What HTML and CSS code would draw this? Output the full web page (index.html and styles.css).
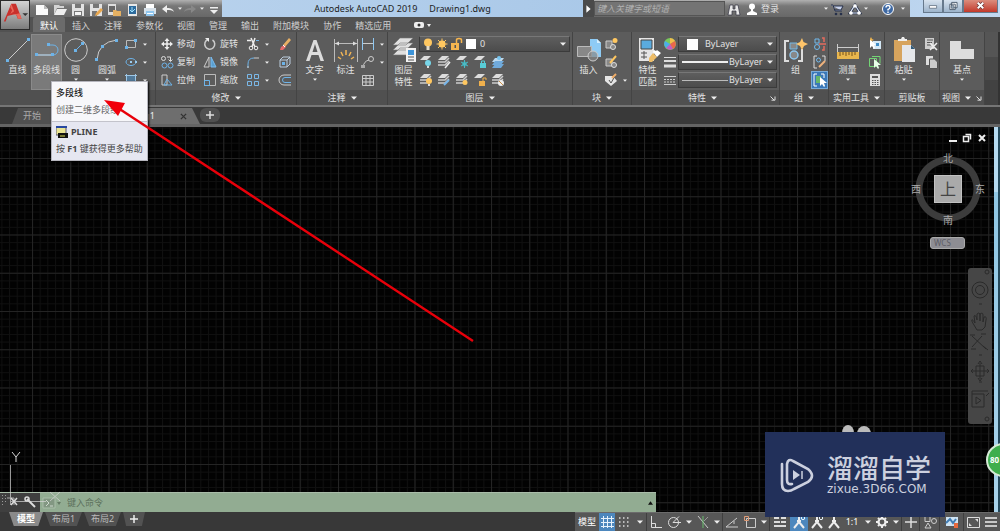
FILE: index.html
```html
<!DOCTYPE html>
<html lang="zh-CN">
<head>
<meta charset="utf-8">
<title>Autodesk AutoCAD 2019 - Drawing1.dwg</title>
<link rel="stylesheet" href="styles.css">
</head>
<body>
<svg class="defs" aria-hidden="true">
  <defs>
    <symbol id="down" viewBox="0 0 6 4"><path d="M0 .5h6L3 3.8z" fill="#eee"/></symbol>
    <symbol id="launch" viewBox="0 0 6 6"><path d="M.5 1.5 4 5M5 1.5V5.2H1.5" stroke="#ddd" fill="none"/></symbol>
    <symbol id="new" viewBox="0 0 16 16"><path d="M2 4h8l4 4v6H2z" fill="#fafafa"/><path d="M10 4v4h4" fill="#bbb"/></symbol>
    <symbol id="open" viewBox="0 0 16 16"><path d="M2 14V4h5l1 1h4v2H5z" fill="#d4d4d4"/><path d="M5 8h10l-3 6H2z" fill="#eee"/></symbol>
    <symbol id="save" viewBox="0 0 16 16"><path d="M2 3h12v12H2z" fill="#e2e2e2"/><path d="M5 3h6v4H5zM4 10h8v5H4z" fill="#777"/><path d="M5 11h6v3H5z" fill="#f4f4f4"/></symbol>
    <symbol id="saveas" viewBox="0 0 16 16"><path d="M2 3h12v12H2z" fill="#e2e2e2"/><path d="M5 3h6v4H5zM4 10h5v5H4z" fill="#777"/><path d="m8 12 5-5 2 2-5 5-3 1z" fill="#e9a84f"/></symbol>
    <symbol id="openweb" viewBox="0 0 16 16"><path d="M2 3h8v11H2z" fill="#ddd"/><path d="M3 5h6v6H3z" fill="#666"/><path d="M7 9h3l1 1h4v5H7z" fill="#e4b062"/></symbol>
    <symbol id="saveweb" viewBox="0 0 16 16"><path d="M4 3h9v12H4z" fill="#e8e8e8"/><path d="M5 5h7v8H5z" fill="#2d6b9d"/><path d="M8 6v5M6 9l2 2 3-3" stroke="#9de1ff" fill="none"/></symbol>
    <symbol id="print" viewBox="0 0 16 16"><path d="M4 3h8v4H4z" fill="#fff"/><path d="M2 7h12v6H2z" fill="#d8e2ea"/><path d="M4 10h8v5H4z" fill="#8fc6ee"/><path d="M5 12h6v1H5z" fill="#fff"/></symbol>
    <symbol id="undo" viewBox="0 0 16 16"><path d="M2 8l5-4v3c4 0 6 1 7 4-2-2-4-2-7-2v3z" fill="#eee"/></symbol>
    <symbol id="redo" viewBox="0 0 16 16"><path d="M14 8 9 4v3c-4 0-6 1-7 4 2-2 4-2 7-2v3z" fill="#888"/></symbol>

    <symbol id="line" viewBox="0 0 26 26"><path d="M3 23 24 2" stroke="#ccc"/><path d="M1 22h3v3H1zM22 1h3v3h-3z" fill="#6db3e8"/></symbol>
    <symbol id="pline" viewBox="0 0 26 26"><path d="M3 18H19a5 5 0 0 0 0-10H15" stroke="#6db3e8" fill="none"/><path d="M3 18H18" stroke="#ccc"/><path d="M1 16h3v3H1zM13 6h3v3h-3zM17 16h3v3h-3z" fill="#6db3e8"/></symbol>
    <symbol id="circle" viewBox="0 0 26 26"><circle cx="13" cy="13" r="11.3" stroke="#ccc" fill="none"/><path d="M13 13 20 6" stroke="#6db3e8"/><path d="M11 12h3v3h-3zM18 5h3v3h-3z" fill="#6db3e8"/></symbol>
    <symbol id="arc" viewBox="0 0 26 26"><path d="M3 23Q4 5 23 3" stroke="#ccc" fill="none"/><path d="M1 21h3v3H1zM7 8h3v3H7zM21 2h3v3h-3z" fill="#6db3e8"/></symbol>
    <symbol id="rect" viewBox="0 0 14 14"><path d="M2.500 3.500h9v7h-9z" stroke="#bbb" fill="none"/><path d="M1 9h3v3H1zM10 2h3v3h-3z" fill="#6db3e8"/></symbol>
    <symbol id="ellipse" viewBox="0 0 14 14"><ellipse cx="7" cy="7" rx="5" ry="3.500" stroke="#6db3e8" fill="none"/><path d="M6 6h2v2H6zM11 6h2v2h-2z" fill="#9ccdf0"/></symbol>
    <symbol id="hatch" viewBox="0 0 14 14"><path d="M3 3h8v9H3z" fill="#527a9a"/><path d="M2.500 1v12M11.500 1v12M1 2.500h12M1 11.500h12" stroke="#9ec7e6" fill="none"/></symbol>
    <symbol id="move" viewBox="0 0 14 14"><path d="M7 3v8M3 7h8" stroke="#eee" stroke-width="1.500"/><path d="M7 1l2.500 3h-5zM7 13l2.500-3h-5zM1 7l3-2.500v5zM13 7l-3-2.500v5z" fill="#eee"/></symbol>
    <symbol id="rotate" viewBox="0 0 14 14"><path d="M9.500 3A5 5 0 1 1 5 2.500" stroke="#ccc" stroke-width="1.500" fill="none"/><path d="M2 1h4v4z" fill="#eee"/></symbol>
    <symbol id="trim" viewBox="0 0 14 14"><path d="M5 1l4 9M9 1 6 10M1 3.500h4" stroke="#eee" stroke-width="1.500"/><circle cx="5" cy="11" r="1.800" stroke="#eee" fill="none"/><circle cx="10" cy="11" r="1.800" stroke="#eee" fill="none"/><path d="M10 3.500h3" stroke="#6db3e8"/></symbol>
    <symbol id="erase" viewBox="0 0 14 14"><path d="m5 8 6-7 2 2-6 7z" fill="#e8b064"/><path d="m3 10 3-2 2 2-3 3H2z" fill="#e86b6b"/><path d="m5 8 2 2" stroke="#fff"/></symbol>
    <symbol id="copy" viewBox="0 0 14 14"><circle cx="3.500" cy="3.500" r="2" stroke="#ddd" fill="none"/><circle cx="4.500" cy="10.500" r="2.500" stroke="#6db3e8" fill="none"/><circle cx="10.500" cy="10.500" r="2.500" stroke="#6db3e8" fill="none"/><path d="M7 2h3.500v4M8.500 4.500l2 2 2-2" stroke="#ddd" fill="none"/></symbol>
    <symbol id="mirror" viewBox="0 0 14 14"><path d="M6 2v10H1z" stroke="#ccc" fill="none"/><path d="M8 2v10h5z" fill="#5a9fd0" stroke="#7abcf0"/></symbol>
    <symbol id="fillet" viewBox="0 0 14 14"><path d="M2 13V9Q2 3 8 3" stroke="#6db3e8" fill="none"/><path d="M8 3h5M2 11v2" stroke="#ccc"/></symbol>
    <symbol id="box" viewBox="0 0 14 14"><path d="M2 5h7v7H2zM2 5l3-3h7v7l-3 3M9 5l3-3" stroke="#bcd" fill="none"/><path d="M4 7h3v3H4z" fill="#6db3e8"/></symbol>
    <symbol id="stretch" viewBox="0 0 14 14"><path d="M2 2h5v10H2z" stroke="#ccc" fill="none"/><path d="M7 6l5 6H4z" stroke="#6db3e8" fill="none"/></symbol>
    <symbol id="scale" viewBox="0 0 14 14"><path d="M1.500 1.500h11v11h-11z" stroke="#bbb" fill="none"/><path d="M1.500 7.500h5v5h-5z" stroke="#6db3e8" fill="none"/></symbol>
    <symbol id="array" viewBox="0 0 14 14"><path d="M1.500 1.500h4v4h-4zM8.500 1.500h4v4h-4zM1.500 8.500h4v4h-4zM8.500 8.500h4v4h-4z" stroke="#7ab8e8" fill="none"/></symbol>
    <symbol id="offset" viewBox="0 0 14 14"><path d="M13 2H6a5 5 0 0 0 0 10h7" stroke="#ccc" fill="none"/><path d="M13 4.500H7a2.500 2.500 0 0 0 0 5h6" stroke="#6db3e8" fill="none"/></symbol>
    <symbol id="text" viewBox="0 0 26 26"><path d="M4 24 11.500 3h3L22 24h-3.500l-2-6h-7l-2 6zm6.500-9h5L13 7z" fill="#ddd"/></symbol>
    <symbol id="dim" viewBox="0 0 26 26"><path d="M1.500 2v23M24.500 2v23M2 6.500h22" stroke="#bbb"/><path d="M2 6.500l4-2v4zM24 6.500l-4-2v4z" fill="#ddd"/><path d="M13 13v5M8 15l2 4M18 15l-2 4M5 20l3 2M21 20l-3 2" stroke="#f2b555" stroke-width="1.500"/></symbol>
    <symbol id="dimlin" viewBox="0 0 14 14"><path d="M1.500 1v12M12.500 1v12" stroke="#8ec7f1"/><path d="M2 6.500h10" stroke="#ccc"/></symbol>
    <symbol id="leader" viewBox="0 0 14 14"><path d="M2 12Q3 6 8 5" stroke="#ccc" fill="none"/><circle cx="10" cy="4" r="2.500" stroke="#ccc" fill="none"/><path d="M0 10h4v3H0z" fill="#aaa"/></symbol>
    <symbol id="table" viewBox="0 0 14 14"><path d="M1.500 2.500h11v10h-11zM1.500 5.500h11M1.500 9h11M5 3v9M9 3v9" stroke="#ccc" fill="none"/></symbol>
    <symbol id="sheets" viewBox="0 0 26 26"><path d="M9 1h13l-7 7H2zM9 6h13l-7 7H2zM9 11h13l-7 7H2z" fill="#e0e0e0" stroke="#777" stroke-width=".6"/><path d="M15 11h10v14H15z" fill="#f2f2f2"/><path d="M17 13h6v5h-6z" fill="#3c94d9"/><path d="M17 20h6M17 23h6" stroke="#555"/></symbol>
    <symbol id="sheet" viewBox="0 0 14 14"><path d="M5 1h7L8 5H1z" fill="#ddd"/></symbol>
    <symbol id="sheet3" viewBox="0 0 14 14"><path d="M5 1h7L8 5H1z" fill="#ddd"/><path d="M1 7h7l4-4M1 10h7l4-4" stroke="#ccc" stroke-width="1.500" fill="none"/></symbol>
    <symbol id="l-off" viewBox="0 0 14 14"><use href="#sheet"/><circle cx="9" cy="8" r="3" fill="#78d6e9"/><path d="M8 11h2v2H8z" fill="#ddd"/></symbol>
    <symbol id="l-iso" viewBox="0 0 14 14"><use href="#sheet3"/><path d="m8 13 5-6" stroke="#eee" stroke-width="1.500"/></symbol>
    <symbol id="l-frz" viewBox="0 0 14 14"><use href="#sheet"/><circle cx="9.500" cy="9" r="2.500" fill="#3e9ba6"/><path d="M9.500 5v8M6 7l7 4M13 7l-7 4" stroke="#4dbbc4"/></symbol>
    <symbol id="l-lock" viewBox="0 0 14 14"><use href="#sheet"/><path d="M7 8h6v5H7z" fill="#58ccd6"/><path d="M8.500 8V6h3v2" stroke="#58ccd6" fill="none"/></symbol>
    <symbol id="l-cur" viewBox="0 0 14 14"><path d="M4 3h9l-3 4H1z" fill="#bdd9ee"/><path d="M4 6h9l-3 4H1zM4 9h9l-3 4H1z" fill="#70aadb"/><circle cx="8" cy="3" r="2" fill="#78c6f0"/></symbol>
    <symbol id="l-on" viewBox="0 0 14 14"><use href="#sheet3"/><circle cx="10" cy="8" r="3" fill="#ffc760"/><path d="M9 11h2v2H9z" fill="#ddd"/></symbol>
    <symbol id="l-un" viewBox="0 0 14 14"><use href="#sheet3"/><path d="m7 12 5-5" stroke="#77b5e9" stroke-width="2"/></symbol>
    <symbol id="l-thaw" viewBox="0 0 14 14"><use href="#sheet3"/><circle cx="10" cy="9.500" r="2.500" fill="#ffc760"/></symbol>
    <symbol id="l-unlock" viewBox="0 0 14 14"><use href="#sheet"/><path d="M6 8h6v5H6z" fill="#efb04d"/><path d="M10 8V5h3v2" stroke="#efb04d" fill="none"/></symbol>
    <symbol id="l-match" viewBox="0 0 14 14"><use href="#sheet3"/><circle cx="10" cy="10" r="3" fill="#eee"/><path d="m8 8 4 4" stroke="#c88d45"/></symbol>
    <symbol id="bulb" viewBox="0 0 14 14"><circle cx="7" cy="5.500" r="4" fill="#ffc760"/><path d="M5.500 9h3v4h-3z" fill="#e5dcc9"/></symbol>
    <symbol id="sun" viewBox="0 0 14 14"><circle cx="7" cy="7" r="3.500" fill="#ffc760"/><path d="M7 1.500v11M1.500 7h11M3 3l8 8M11 3l-8 8" stroke="#ffc760"/></symbol>
    <symbol id="unlock" viewBox="0 0 14 14"><path d="M2 6h8v7H2z" fill="#f7b64f"/><path d="M7.500 6V3q0-1.500 2.500-1.500t2.500 1.500v3" stroke="#f7b64f" stroke-width="1.500" fill="none"/><path d="M5.500 8h1.500v3H5.500z" fill="#555"/></symbol>
    <symbol id="insert" viewBox="0 0 26 26"><path d="M14 2h7l4 4v14H14z" fill="#8ecbf5"/><path d="M21 2v4h4" fill="#d5efff"/><path d="M1.500 9.500h14v10h-14z" fill="#888" stroke="#bbb"/><circle cx="17" cy="19" r="5" fill="#888" fill-opacity=".7" stroke="#ccc"/></symbol>
    <symbol id="blk1" viewBox="0 0 14 14"><path d="M2 4h6v7H2z" fill="#888" stroke="#ccc"/><circle cx="9" cy="10" r="2.500" fill="#888" stroke="#ddd"/><circle cx="11" cy="3.500" r="2.500" fill="#ffc760"/></symbol>
    <symbol id="blk2" viewBox="0 0 14 14"><path d="M2 4h6v7H2z" fill="#888" stroke="#ccc"/><circle cx="10" cy="10" r="2.500" fill="#888" stroke="#ddd"/><path d="m6 8 6-7" stroke="#ffc760" stroke-width="2"/></symbol>
    <symbol id="blk3" viewBox="0 0 14 14"><path d="M1 3v5l6 5 6-5-4-5z" fill="#e5e5e5"/><path d="m5 7 2 3 4-7" stroke="#555" fill="none"/><path d="m8 5 4-4" stroke="#efad68" stroke-width="2"/></symbol>
    <symbol id="match" viewBox="0 0 26 26"><path d="M4 1h15v23H4z" fill="#e5e5e5"/><path d="M6 3h11v9H6z" fill="#5aabdf" stroke="#444"/><path d="M6 16h6M6 20h6M9 14v8" stroke="#555"/><path d="m14 21 4-5 4 4-5 5h-3z" fill="#edbd68"/><path d="m18 15 4 5 4-4-4-3-1 1-2-1z" fill="#fff"/></symbol>
    <symbol id="wheel" viewBox="0 0 14 14"><circle cx="7" cy="7" r="6" fill="#79c85a"/><path d="M7 7V1a6 6 0 0 1 5 3z" fill="#f2bd4b"/><path d="M7 7l5-3a6 6 0 0 1-2 8z" fill="#ec674b"/><path d="M7 7l3 5a6 6 0 0 1-7-1z" fill="#c45bc5"/><path d="M7 7 3 11A6 6 0 0 1 2 4z" fill="#4cace8"/></symbol>
    <symbol id="lw" viewBox="0 0 14 14"><path d="M1 2.500h12" stroke="#ddd"/><path d="M1 6h12" stroke="#ddd" stroke-width="2"/><path d="M1 11h12" stroke="#ddd" stroke-width="3"/></symbol>
    <symbol id="lt" viewBox="0 0 14 14"><path d="M1 3.500h12M1 11.500h12" stroke="#ccc"/><path d="M1 6.500h12M1 9h12" stroke="#ccc" stroke-dasharray="2 1"/></symbol>
    <symbol id="group" viewBox="0 0 26 26"><path d="M6 4H2v20h4M15 24h4V12" stroke="#ddd" stroke-width="2" fill="none"/><path d="M7 6h7v6H7z" fill="#888" stroke="#73b8e6"/><circle cx="11" cy="18" r="4" fill="#888" stroke="#8ec7ee" stroke-width="1.500"/><path d="m19 1 1.500 4L25 7l-4 2-2 4-2-4-4-2 4-2z" fill="#ffc56a"/></symbol>
    <symbol id="ungroup" viewBox="0 0 14 14"><path d="M2 2h4v4H2z" stroke="#71b9ed" fill="none"/><circle cx="4" cy="10" r="2.500" stroke="#71b9ed" fill="none"/><path d="M9 1h2v4M9 13h2V9M6 7h7" stroke="#e36b5d" stroke-width="1.500" fill="none"/></symbol>
    <symbol id="gedit" viewBox="0 0 14 14"><path d="M4 1H1v12h3M9 1h3v5" stroke="#ddd" fill="none"/><circle cx="5.500" cy="5" r="2" stroke="#71b9ed" fill="none"/><path d="m6 12 6-6" stroke="#eeb27c" stroke-width="2"/></symbol>
    <symbol id="gsel" viewBox="0 0 14 14"><path d="M4 1H1v12h3M8 1h3v4" stroke="#fff" fill="none"/><path d="M3 3h5v7H3z" fill="#65b66b"/><path d="M7 4v9l2-2 2 3 1-1-1-3h3z" fill="#fff"/></symbol>
    <symbol id="measure" viewBox="0 0 26 26"><path d="M2.500 7v8M23.500 7v8M3 10.500h20" stroke="#ccc"/><path d="M2 15h22v7H2z" fill="#e9b64d"/><path d="M5 15v4M8 15v3M11 15v4M14 15v3M17 15v4M20 15v3" stroke="#75501c"/></symbol>
    <symbol id="qsel" viewBox="0 0 14 14"><path d="M5 4h8v8H5z" fill="#d4e8f6"/><path d="M8 6h3v3H8z" fill="#3f8cc6"/><path d="M2 2v9l2-2 2 3 1-1-1-3h2z" fill="#fff"/><path d="m3 0 1 2 2 1-3 1-1-2z" fill="#f2b64c"/></symbol>
    <symbol id="selall" viewBox="0 0 14 14"><path d="M1.500 3.500h7v8h-7zM4 1.500h8v7" stroke="#73d475" fill="none"/><path d="M6 4v9l2-2 2 3 1-1-1-3h3z" fill="#e9ffe9"/></symbol>
    <symbol id="calc" viewBox="0 0 14 14"><path d="M2 1h10v12H2z" fill="#ddd"/><path d="M4 3h6v2H4z" fill="#555"/><path d="M4 7.500h7M4 9.500h7M4 11.500h7" stroke="#555" stroke-dasharray="1.500 1"/></symbol>
    <symbol id="paste" viewBox="0 0 26 26"><path d="M3 3h17v21H3z" fill="#d7a45d"/><path d="M7 4V2h3l1-2h2l1 2h2v2z" fill="#eee"/><path d="M11 8h9l4 4v13H11z" fill="#e5e7ea"/><path d="M20 8v4h4" fill="#2f5a7b"/></symbol>
    <symbol id="cut" viewBox="0 0 14 14"><path d="M1 1h9v11H1z" fill="#ccc"/><path d="M3 3h6M3 5.500h5M3 8h4" stroke="#555"/><path d="m6 6 7 7M13 6l-7 7" stroke="#eee" stroke-width="1.500"/></symbol>
    <symbol id="copyclip" viewBox="0 0 14 14"><path d="M2 1h7v9H2z" fill="#ddd"/><path d="M5.500 4h5l3 3v6.500h-8z" fill="#ccc" stroke="#555"/></symbol>
    <symbol id="base" viewBox="0 0 26 26"><path d="M1 4h11v8h13v10H1z" fill="#ddd"/></symbol>
    <symbol id="bino" viewBox="0 0 14 14"><path d="M3 3h3v4h2V3h3l2 10H9V9H5v4H1z" fill="#e9e9e9" stroke="#334" stroke-width=".7"/></symbol>
    <symbol id="user" viewBox="0 0 14 14"><circle cx="7" cy="4.500" r="3" fill="#fff"/><path d="M6 7h2v2l4 2v2H2v-2l4-2z" fill="#fff"/></symbol>
    <symbol id="cart" viewBox="0 0 14 14"><path d="M1 3h2l2 6h7M4 4h9l-2 4H5" stroke="#26304a" fill="#c8d2ec"/><circle cx="6" cy="12" r="1.300" fill="#26304a"/><circle cx="11" cy="12" r="1.300" fill="#26304a"/></symbol>
    <symbol id="a360" viewBox="0 0 14 14"><path d="M7 3 12 11H2z" stroke="#26304a" fill="none" stroke-width="2.500"/><path d="M7 3 12 11H2z" stroke="#dce5f5" fill="none" stroke-width="1.200"/><circle cx="7" cy="4" r="1.800" fill="#fff"/><circle cx="3" cy="11" r="1.800" fill="#fff"/><circle cx="11" cy="11" r="1.800" fill="#fff"/></symbol>
    <symbol id="help" viewBox="0 0 14 14"><circle cx="7" cy="7" r="5.500" fill="#3e69a4" stroke="#fff"/><path d="M5 5.500q0-2 2-2t2 2q0 1-2 2v1M7 9.500v1.500" stroke="#fff" stroke-width="1.400" fill="none"/></symbol>

    <symbol id="s-grid" viewBox="0 0 14 14"><path d="M3.500 1v12M7.500 1v12M11.500 1v12M1 3.500h13M1 7.500h13M1 11.500h13" stroke="#e8f2fb"/></symbol>
    <symbol id="s-snap" viewBox="0 0 14 14"><path d="M2 3h11M2 7h11M2 11h11" stroke="#ddd" stroke-width="1.500" stroke-dasharray="1.500 2.500"/></symbol>
    <symbol id="s-ortho" viewBox="0 0 14 14"><path d="M2.500 1v11.500H13M2.500 8.500h4v4" stroke="#ddd" fill="none"/></symbol>
    <symbol id="s-polar" viewBox="0 0 14 14"><circle cx="6.500" cy="7.500" r="5" stroke="#ddd" fill="none"/><path d="M6 7.500h8M6 7.500l6-6" stroke="#ddd"/></symbol>
    <symbol id="s-iso" viewBox="0 0 14 14"><path d="M2 1 12 13" stroke="#ccc"/><path d="M7 1v12" stroke="#69bc6c"/><path d="m8 6 4-4" stroke="#999"/></symbol>
    <symbol id="s-track" viewBox="0 0 14 14"><path d="m1 12 11-9M1 12h12M9 6v3" stroke="#ccc" fill="none"/></symbol>
    <symbol id="s-osnap" viewBox="0 0 14 14"><path d="M3.500 3.500h9v9h-9z" stroke="#ccc" fill="none"/><path d="M1.500 1.500h4v4h-4z" stroke="#df9b76" fill="none"/></symbol>
    <symbol id="s-lw" viewBox="0 0 14 14"><path d="M1 3h5M8 3h5M1 7h6M8 7h5M1 11h12" stroke="#ddd" stroke-width="2"/></symbol>
    <symbol id="s-ann" viewBox="0 0 14 14"><path d="M7 1v6L2 13M7 7l5 6M5 6h4" stroke="#eee" stroke-width="2" fill="none"/></symbol>
    <symbol id="s-annv" viewBox="0 0 14 14"><use href="#s-ann"/><circle cx="11" cy="3" r="1.700" stroke="#e9f5ff" fill="none"/></symbol>
    <symbol id="s-gear" viewBox="0 0 14 14"><circle cx="7" cy="7" r="3.500" stroke="#eee" stroke-width="2.200" fill="none"/><path d="M7 1v2M7 11v2M1 7h2M11 7h2M3 3l1 1M10 10l1 1M11 3l-1 1M4 10l-1 1" stroke="#eee" stroke-width="2"/></symbol>
    <symbol id="s-plus" viewBox="0 0 14 14"><path d="M7 1v12M1 7h12" stroke="#ddd" stroke-width="1.500"/></symbol>
    <symbol id="s-shapes" viewBox="0 0 14 14"><path d="M2 1.500h5v5H2zM5 8l3 5H2z" stroke="#ccc" fill="none"/><circle cx="11" cy="6" r="2.500" stroke="#ccc" fill="none"/></symbol>
    <symbol id="s-perf" viewBox="0 0 14 14"><path d="M1 2h12v9H1z" fill="#cfe4f4"/><path d="m1 8 4-4 3 4 3-4" stroke="#417db4" stroke-width="2" fill="none"/><path d="M9 8h4v5H9z" fill="#e5693e"/></symbol>
    <symbol id="s-full" viewBox="0 0 14 14"><path d="M1.500 2.500h12v10h-12z" stroke="#ddd" fill="none"/><path d="M9 4h3v3zM6 11H3V8z" fill="#ddd"/></symbol>
    <symbol id="s-menu" viewBox="0 0 14 14"><path d="M1 3h12M1 7h12M1 11h12" stroke="#eee" stroke-width="1.500"/></symbol>
  </defs>
</svg>

<header class="top">
  <button class="app" aria-label="应用程序菜单"><svg viewBox="0 0 30 30"><path d="M3 22 11 3h5l6 16h-4l-2-5-9 2-2 6z" fill="#c9302c"/><path d="m11 3 3 8-4 3 2-4-2-3zM12 15l8-2 2 6h-4l-1-4z" fill="#e86659"/><path d="M23 13h6l-3 3z" fill="#333"/></svg></button>
  <div class="titlebar">
    <nav class="qat" aria-label="快速访问">
      <button aria-label="新建"><svg><use href="#new"/></svg></button>
      <button aria-label="打开"><svg><use href="#open"/></svg></button>
      <button aria-label="保存"><svg><use href="#save"/></svg></button>
      <button aria-label="另存为"><svg><use href="#saveas"/></svg></button>
      <button aria-label="从网络打开"><svg><use href="#openweb"/></svg></button>
      <button aria-label="保存到网络"><svg><use href="#saveweb"/></svg></button>
      <button aria-label="打印"><svg><use href="#print"/></svg></button>
      <button aria-label="放弃"><svg><use href="#undo"/></svg></button>
      <svg class="tiny"><use href="#down"/></svg>
      <button aria-label="重做"><svg><use href="#redo"/></svg></button>
      <svg class="tiny"><use href="#down"/></svg>
      <button class="narrow" aria-label="自定义"><svg viewBox="0 0 8 16"><path d="M0 6h8v1.500H0zM0 9h8l-4 4z" fill="#eee"/></svg></button>
    </nav>
    <h1 class="title"><span>Autodesk AutoCAD 2019</span><span>Drawing1.dwg</span></h1>
    <div class="info">
      <svg class="play" viewBox="0 0 10 16"><path d="M3 5v7l4-3.500z" fill="#fff"/></svg>
      <input class="search" type="text" aria-label="搜索" placeholder="键入关键字或短语">
      <svg class="i14"><use href="#bino"/></svg>
      <button class="login"><svg class="i14"><use href="#user"/></svg>登录</button>
      <svg class="tiny"><use href="#down"/></svg>
      <button aria-label="应用商店"><svg class="i14"><use href="#cart"/></svg></button>
      <button aria-label="保持连接"><svg class="i14"><use href="#a360"/></svg></button>
      <svg class="tiny"><use href="#down"/></svg>
      <button class="help" aria-label="帮助"><svg class="i14"><use href="#help"/></svg></button>
      <svg class="tiny"><use href="#down"/></svg>
    </div>
    <div class="winbtns">
      <button aria-label="最小化"><svg viewBox="0 0 20 13"><path d="M6 6h8v3H6z" fill="#fff" stroke="#567" stroke-width=".8"/></svg></button>
      <button aria-label="还原"><svg viewBox="0 0 20 13"><path d="M8.500 2.500h6v6h-6zM6.500 4.500h6v6h-6z" fill="#fff" stroke="#456"/><path d="M8 6h3v3H8z" fill="#9ab" stroke="#456" stroke-width=".6"/></svg></button>
      <button class="close" aria-label="关闭"><svg viewBox="0 0 36 13"><path d="m15 3 6 6M21 3l-6 6" stroke="#633" stroke-width="3.600"/><path d="m15 3 6 6M21 3l-6 6" stroke="#fff" stroke-width="2.200"/></svg></button>
    </div>
  </div>
  <nav class="tabs">
    <button class="on">默认</button><button>插入</button><button>注释</button><button>参数化</button><button>视图</button><button>管理</button><button>输出</button><button>附加模块</button><button>协作</button><button>精选应用</button>
    <svg class="tabend" viewBox="0 0 18 8"><rect x="0" y="1" width="10" height="6" rx="2" fill="#eee"/><circle cx="5" cy="4" r="1.500" fill="#333"/><path d="M13 3h4l-2 3z" fill="#eee"/></svg>
  </nav>
</header>

<main class="ribbon">
  <section class="panel p-draw">
    <div class="body">
      <button class="big"><svg><use href="#line"/></svg>直线</button>
      <button class="big hot"><svg><use href="#pline"/></svg>多段线</button>
      <button class="big"><svg><use href="#circle"/></svg>圆<svg class="dd"><use href="#down"/></svg></button>
      <button class="big wide"><svg><use href="#arc"/></svg>圆弧<svg class="dd"><use href="#down"/></svg></button>
      <div class="col">
        <button aria-label="矩形"><svg><use href="#rect"/></svg><svg class="dd"><use href="#down"/></svg></button>
        <button aria-label="椭圆"><svg><use href="#ellipse"/></svg><svg class="dd"><use href="#down"/></svg></button>
        <button aria-label="图案填充"><svg><use href="#hatch"/></svg><svg class="dd"><use href="#down"/></svg></button>
      </div>
    </div>
    <footer></footer>
  </section>
  <section class="panel p-modify">
    <div class="body">
      <div class="col lab">
        <button><svg><use href="#move"/></svg>移动</button>
        <button><svg><use href="#copy"/></svg>复制</button>
        <button><svg><use href="#stretch"/></svg>拉伸</button>
      </div>
      <div class="col lab">
        <button><svg><use href="#rotate"/></svg>旋转</button>
        <button><svg><use href="#mirror"/></svg>镜像</button>
        <button><svg><use href="#scale"/></svg>缩放</button>
      </div>
      <div class="col">
        <button aria-label="修剪"><svg><use href="#trim"/></svg><svg class="dd"><use href="#down"/></svg></button>
        <button aria-label="圆角"><svg><use href="#fillet"/></svg><svg class="dd"><use href="#down"/></svg></button>
        <button aria-label="阵列"><svg><use href="#array"/></svg><svg class="dd"><use href="#down"/></svg></button>
      </div>
      <div class="col slim">
        <button aria-label="删除"><svg><use href="#erase"/></svg></button>
        <button aria-label="分解"><svg><use href="#box"/></svg></button>
        <button aria-label="偏移"><svg><use href="#offset"/></svg></button>
      </div>
    </div>
    <footer>修改<svg><use href="#down"/></svg></footer>
  </section>
  <section class="panel p-annot">
    <div class="body">
      <button class="big"><svg><use href="#text"/></svg>文字<svg class="dd"><use href="#down"/></svg></button>
      <button class="big"><svg><use href="#dim"/></svg>标注</button>
      <div class="col">
        <button aria-label="线性"><svg><use href="#dimlin"/></svg><svg class="dd"><use href="#down"/></svg></button>
        <button aria-label="引线"><svg><use href="#leader"/></svg><svg class="dd"><use href="#down"/></svg></button>
        <button aria-label="表格"><svg><use href="#table"/></svg></button>
      </div>
    </div>
    <footer>注释<svg><use href="#down"/></svg></footer>
  </section>
  <section class="panel p-layer">
    <div class="body">
      <button class="big"><svg><use href="#sheets"/></svg>图层<br>特性</button>
      <div class="layers">
        <div class="combo">
          <svg class="i14"><use href="#bulb"/></svg><svg class="i14"><use href="#sun"/></svg><svg class="i14"><use href="#unlock"/></svg><i class="sw"></i>
          <select aria-label="图层"><option>0</option></select><svg class="dd"><use href="#down"/></svg>
        </div>
        <div class="icons">
          <button aria-label="关"><svg><use href="#l-off"/></svg></button><button aria-label="隔离"><svg><use href="#l-iso"/></svg></button><button aria-label="冻结"><svg><use href="#l-frz"/></svg></button><button aria-label="锁定"><svg><use href="#l-lock"/></svg></button><button aria-label="置为当前"><svg><use href="#l-cur"/></svg></button>
          <button aria-label="打开所有图层"><svg><use href="#l-on"/></svg></button><button aria-label="取消隔离"><svg><use href="#l-un"/></svg></button><button aria-label="解冻"><svg><use href="#l-thaw"/></svg></button><button aria-label="解锁"><svg><use href="#l-unlock"/></svg></button><button aria-label="匹配图层"><svg><use href="#l-match"/></svg></button>
        </div>
      </div>
    </div>
    <footer>图层<svg><use href="#down"/></svg></footer>
  </section>
  <section class="panel p-block">
    <div class="body">
      <button class="big"><svg><use href="#insert"/></svg>插入</button>
      <div class="col">
        <button aria-label="创建块"><svg><use href="#blk1"/></svg></button>
        <button aria-label="编辑块"><svg><use href="#blk2"/></svg></button>
        <button aria-label="编辑属性"><svg><use href="#blk3"/></svg><svg class="dd"><use href="#down"/></svg></button>
      </div>
    </div>
    <footer>块<svg><use href="#down"/></svg></footer>
  </section>
  <section class="panel p-props">
    <div class="body">
      <button class="big"><svg><use href="#match"/></svg>特性<br>匹配</button>
      <div class="props">
        <svg class="i14"><use href="#wheel"/></svg>
        <div class="combo"><i class="sw"></i><select aria-label="颜色"><option>ByLayer</option></select><svg class="dd"><use href="#down"/></svg></div>
        <svg class="i14"><use href="#lw"/></svg>
        <div class="combo"><i class="rule thick"></i><select aria-label="线宽"><option>ByLayer</option></select><svg class="dd"><use href="#down"/></svg></div>
        <svg class="i14"><use href="#lt"/></svg>
        <div class="combo"><i class="rule"></i><select aria-label="线型"><option>ByLayer</option></select><svg class="dd"><use href="#down"/></svg></div>
      </div>
    </div>
    <footer>特性<svg><use href="#down"/></svg><svg class="corner"><use href="#launch"/></svg></footer>
  </section>
  <section class="panel p-group">
    <div class="body">
      <button class="big"><svg><use href="#group"/></svg>组</button>
      <div class="col slim">
        <button aria-label="解除编组"><svg><use href="#ungroup"/></svg></button>
        <button aria-label="组编辑"><svg><use href="#gedit"/></svg></button>
        <button class="sel" aria-label="组选择"><svg><use href="#gsel"/></svg></button>
      </div>
    </div>
    <footer>组<svg><use href="#down"/></svg></footer>
  </section>
  <section class="panel p-util">
    <div class="body">
      <button class="big"><svg><use href="#measure"/></svg>测量<svg class="dd"><use href="#down"/></svg></button>
      <div class="col slim">
        <button aria-label="快速选择"><svg><use href="#qsel"/></svg></button>
        <button aria-label="全部选择"><svg><use href="#selall"/></svg></button>
        <button aria-label="计算器"><svg><use href="#calc"/></svg></button>
      </div>
    </div>
    <footer>实用工具<svg><use href="#down"/></svg></footer>
  </section>
  <section class="panel p-clip">
    <div class="body">
      <button class="big"><svg><use href="#paste"/></svg>粘贴<svg class="dd"><use href="#down"/></svg></button>
      <div class="col slim">
        <button aria-label="剪切"><svg><use href="#cut"/></svg></button>
        <button aria-label="复制裁剪"><svg><use href="#copyclip"/></svg></button>
      </div>
    </div>
    <footer>剪贴板</footer>
  </section>
  <section class="panel p-view">
    <div class="body"><button class="big"><svg><use href="#base"/></svg>基点<svg class="dd"><use href="#down"/></svg></button></div>
    <footer>视图<svg><use href="#down"/></svg><svg class="corner"><use href="#launch"/></svg></footer>
  </section>
  <div class="fill"></div>
</main>

<nav class="files">
  <button class="file">开始</button>
  <button class="file on"><span>Drawing1</span><svg viewBox="0 0 8 8"><path d="m1 1 6 6M7 1 1 7" stroke="#333" stroke-width="1.500"/></svg></button>
  <button class="file add" aria-label="新图形"><svg viewBox="0 0 8 8"><path d="M4 0v8M0 4h8" stroke="#ddd" stroke-width="1.500"/></svg></button>
</nav>

<div class="work">
  <div class="canvas">
    <svg class="grid" aria-hidden="true">
      <defs>
        <pattern id="minor" x="1.400" y=".4" width="7.650" height="7.650" patternUnits="userSpaceOnUse"><path d="M.5 0v7.650M0 .5h7.650" stroke="#101010"/></pattern>
        <pattern id="major" x="32" y="31" width="38.250" height="38.250" patternUnits="userSpaceOnUse"><path d="M.5 0v38.250M0 .5h38.250" stroke="#242424"/></pattern>
      </defs>
      <rect width="100%" height="100%" fill="#020202"/><rect width="100%" height="100%" fill="url(#minor)"/><rect width="100%" height="100%" fill="url(#major)"/>
    </svg>
    <svg class="docbtns" viewBox="0 0 38 10"><path d="M1 7h8v2H1z" fill="#eee"/><path d="M17.500 1.500h5v5M15.500 3.500h5v5h-5z" stroke="#eee" stroke-width="1.500" fill="none"/><path d="m31 2 6 6M37 2l-6 6" stroke="#eee" stroke-width="2"/></svg>
    <div class="viewcube">
      <span class="n">北</span><span class="w">西</span><button class="face">上</button><span class="e">东</span><span class="s">南</span>
    </div>
    <button class="wcs">WCS</button>
    <svg class="navbar" viewBox="0 0 24 156">
      <rect width="24" height="156" rx="3" fill="#464646"/>
      <g stroke="#2a2a2a" fill="none"><circle cx="19" cy="4" r="2"/><circle cx="12" cy="22" r="8"/><circle cx="12" cy="22" r="4.500"/><path d="M11 36h3M11 87h3M11 114h3"/><path d="M6 57c-4-6-2-7 1-2l-1-7q2-2 3 4V46q2-2 3 0v7-7q3-2 3 1v7l1-5q3-1 2 3l-1 7-3 3H9z"/><path d="M4 68l14 13M4 79l10-11M2 67h5M13 66h5M15 78l5 4M3 81h5"/><path d="M12 95v16M4 103h16M8 98h8v10H8zM10 96l2-3 2 3M10 110l2 3 2-3M5 101l-2 2 2 2M19 101l2 2-2 2"/><path d="M4 126h12v13H4zM4 126v-3h16M8 129v7l5-3.500zM18 128l3-3"/><circle cx="19" cy="151" r="2"/></g>
    </svg>
    <svg class="ucs" viewBox="0 0 62 52"><path d="M10.500 5v40M7 38h7v7M10 41.500h36M12 -8M50 32l10 9M60 32l-10 9" stroke="#d8d8d8" fill="none"/></svg>
    <svg class="yaxis" viewBox="0 0 10 12"><path d="M1 1l4 5 4-5M5 6v5" stroke="#d8d8d8" fill="none"/></svg>
    <svg class="mascot" viewBox="0 0 30 14"><ellipse cx="7" cy="8" rx="6" ry="8" fill="#bbb"/><ellipse cx="23" cy="9" rx="7" ry="8" fill="#bbb"/></svg>
    <form class="cmd">
      <span class="tools"><svg viewBox="0 0 40 18"><path d="M2 2h1v1H2zM2 5h1v1H2zM2 8h1v1H2zM2 11h1v1H2zM5 2h1v1H5zM5 5h1v1H5zM5 8h1v1H5z" fill="#999"/><path d="M11 5l6 7M17 5l-6 7" stroke="#ddd" stroke-width="1.500"/><path d="m27 6 8 8" stroke="#ddd" stroke-width="2"/><circle cx="27" cy="6" r="2" stroke="#ddd" stroke-width="1.500" fill="none"/></svg></span>
      <svg class="prompt" viewBox="0 0 22 18"><path d="M3 4h12v10H3z" fill="#829782" stroke="#a9bea9"/><path d="m6 6 3 3-3 3M10 12h3" stroke="#cfd9cf" fill="none"/><path d="M17 8h4l-2 3z" fill="#657a65"/></svg>
      <input type="text" aria-label="命令" placeholder="键入命令">
      <svg class="up" viewBox="0 0 6 4"><path d="M0 4h6L3 0z" fill="#111"/></svg>
    </form>
  </div>
  <div class="edge"></div>
</div>

<footer class="status">
  <nav class="layouts">
    <button class="on">模型</button><button>布局1</button><button>布局2</button><button class="add" aria-label="新布局"><svg viewBox="0 0 8 8"><path d="M4 0v8M0 4h8" stroke="#eee" stroke-width="1.500"/></svg></button>
  </nav>
  <div class="toggles">
    <button class="w24 txt">模型</button>
    <button class="w16 act" aria-label="栅格"><svg><use href="#s-grid"/></svg></button>
    <button class="w18" aria-label="捕捉"><svg><use href="#s-snap"/></svg></button>
    <button class="w14 sep" aria-label="捕捉选项"><svg class="dd"><use href="#down"/></svg></button>
    <button class="w18" aria-label="正交"><svg><use href="#s-ortho"/></svg></button>
    <button class="w18" aria-label="极轴"><svg><use href="#s-polar"/></svg></button>
    <button class="w11" aria-label="极轴选项"><svg class="dd"><use href="#down"/></svg></button>
    <button class="w18" aria-label="等轴测"><svg><use href="#s-iso"/></svg></button>
    <button class="w11 sep" aria-label="等轴测选项"><svg class="dd"><use href="#down"/></svg></button>
    <button class="w18" aria-label="追踪"><svg><use href="#s-track"/></svg></button>
    <button class="w18" aria-label="对象捕捉"><svg><use href="#s-osnap"/></svg></button>
    <button class="w11 sep" aria-label="对象捕捉选项"><svg class="dd"><use href="#down"/></svg></button>
    <button class="w20" aria-label="线宽显示"><svg><use href="#s-lw"/></svg></button>
    <button class="w18 act" aria-label="注释可见性"><svg><use href="#s-annv"/></svg></button>
    <button class="w18" aria-label="自动缩放"><svg><use href="#s-annv"/></svg></button>
    <button class="w16" aria-label="注释比例"><svg><use href="#s-ann"/></svg></button>
    <button class="w20 txt">1:1</button>
    <button class="w11" aria-label="比例选项"><svg class="dd"><use href="#down"/></svg></button>
    <button class="w18" aria-label="切换工作空间"><svg><use href="#s-gear"/></svg></button>
    <button class="w11 sep" aria-label="工作空间选项"><svg class="dd"><use href="#down"/></svg></button>
    <button class="w18 sep" aria-label="注释监视器"><svg><use href="#s-plus"/></svg></button>
    <button class="w20 sep" aria-label="隔离对象"><svg><use href="#s-shapes"/></svg></button>
    <button class="w24 sep" aria-label="图形性能"><svg><use href="#s-perf"/></svg></button>
    <button class="w18" aria-label="全屏显示"><svg><use href="#s-full"/></svg></button>
    <button class="w18" aria-label="自定义"><svg><use href="#s-menu"/></svg></button>
  </div>
</footer>

<aside class="tip" role="tooltip">
  <div class="tip-a"><strong>多段线</strong><p>创建二维多段线</p></div>
  <div class="tip-b"><p class="cmdname"><svg viewBox="0 0 12 12"><path d="M0 0h10v9H0z" fill="#e9e493" stroke="#557"/><path d="M0 0h11v2H0z" fill="#2848a0"/><path d="M2 7h10v5H2z" fill="#111"/><path d="M4 10h5" stroke="#dd5"/></svg><b>PLINE</b></p><p>按 <b>F1</b> 键获得更多帮助</p></div>
</aside>
<svg class="pointer" viewBox="0 0 372 245"><path d="M12 7 370 242" stroke="#e8000a" stroke-width="2.400"/><path d="M1 1 22 4 15 17z" fill="#f1000a"/></svg>
<div class="brand">
  <svg viewBox="0 0 36 36"><path d="M3 7v20q0 7 6 7 3 0 6-2l14-7q8-6 0-13L14 4Q9 1 8 7v16q0 5 5 4" stroke="#ccd0df" stroke-width="2.600" fill="none" stroke-linecap="round"/><path d="M14 13v10l7-5z" fill="#ccd0df"/><path d="M23 14v8" stroke="#ccd0df" stroke-width="1.500"/></svg>
  <div><strong>溜溜自学</strong><span>zixue.3D66.COM</span></div>
</div>
<div class="ball">80</div>
</body>
</html>
```
FILE: styles.css
```css
* { box-sizing: border-box; }
body {
  margin: 0;
  height: 100vh;
  display: flex;
  flex-direction: column;
  position: relative;
  overflow: hidden;
  background: #3a3a3a;
  color: #e2e2e2;
  font: 9px/12px "Noto Sans", "Noto Sans CJK SC", sans-serif;
}
button, input, select {
  font: inherit;
  color: inherit;
  background: none;
  border: 0;
  padding: 0;
  margin: 0;
}
button { white-space: nowrap; }
svg { display: block; flex: none; }
p { margin: 0; }
.defs { position: absolute; width: 0; height: 0; }
.i14 { width: 14px; height: 14px; }
.tiny { width: 4px; height: 3px; }
.dd { width: 6px; height: 4px; }

.top {
  display: grid;
  grid-template: 17px 15px / 30px 1fr;
  background: #525252;
}
.app {
  grid-row: 1 / 3;
  background: linear-gradient(#d2d2d2, #7c7c7c);
  border: 1px solid #2b2b2b;
  height: 30px;
}
.app svg { width: 28px; height: 28px; }
.titlebar {
  display: flex;
  background: linear-gradient(100deg, #bdd5ee, #a9c8e8 60%, #c1d8f0);
}
.qat, .info {
  display: flex;
  align-items: center;
  background: linear-gradient(#b0b0b0, #777 35%, #686868);
}
.qat { padding-left: 4px; width: 192px; }
.qat button { width: 18px; }
.qat button svg { width: 16px; height: 16px; }
.qat .narrow { width: 12px; padding-left: 6px; }
.qat .narrow svg { width: 8px; }
.title {
  flex: 1;
  display: flex;
  justify-content: center;
  gap: 12px;
  margin: 0;
  color: #222;
  font: 9px/17px "Noto Sans", sans-serif;
}
.info { width: 327px; }
.play { width: 11px; height: 17px; background: #4a4a4a; }
.search {
  width: 131px;
  height: 15px;
  padding: 0 2px;
  margin-right: 2px;
  background: #747474;
  border: 1px solid #555;
  font-style: italic;
}
.search::placeholder { color: #b2b2b2; }
.login { display: flex; align-items: center; margin: 0 45px 0 2px; }
.info button svg { margin: 0 2px; }
.info .help { margin-left: 11px; }
.info .help + .tiny { margin-left: 4px; }
.winbtns {
  display: flex;
  width: 90px;
  padding: 0 2px 4px 13px;
}
.winbtns button {
  width: 20px;
  background: linear-gradient(#d7e3ef, #9db4cb);
  border: solid #66798c;
  border-width: 0 1px 1px;
}
.winbtns .close { flex: 1; background: linear-gradient(#dc8d7d, #c2392b); }
.winbtns svg { width: 100%; height: 12px; }

.tabs { display: flex; align-items: stretch; padding-left: 3px; color: #cfcfcf; }
.tabs button { padding: 2px 7px 0; }
.tabs .on { background: #6b6b6b; color: #fff; border-radius: 2px 2px 0 0; }
.tabend { width: 18px; height: 8px; margin: 4px 0 0 16px; }

.ribbon { display: flex; background: #5a5a5a; border-bottom: 2px solid #757575; }
.panel {
  display: flex;
  flex-direction: column;
  flex: none;
  border-right: 1px solid #444;
  background: #5c5c5c;
}
.panel .body { height: 58px; padding-top: 3px; display: flex; }
.panel footer {
  height: 15px;
  display: flex;
  align-items: center;
  justify-content: center;
  gap: 5px;
  background: #505050;
}
.panel footer svg { width: 6px; height: 4px; }
.panel footer .corner { width: 6px; height: 6px; }
.p-props .corner { margin-left: 48px; }
.p-props footer { padding-left: 53px; }
.p-draw { width: 156px; }
.p-modify { width: 141px; }
.p-annot { width: 91px; }
.p-layer { width: 185px; }
.p-block { width: 59px; }
.p-props { width: 148px; }
.p-group { width: 49px; }
.p-util { width: 56px; }
.p-clip { width: 55px; }
.p-view { width: 45px; }
.fill { flex: 1; background: linear-gradient(#555 34%, #4a4a4a 34% 66%, #424242 66%); border-right: 2px solid #333; }

.big {
  width: 29px;
  height: 54px;
  display: flex;
  flex-direction: column;
  align-items: center;
  flex: none;
  padding-top: 2px;
}
.big > svg:first-child { width: 26px; height: 26px; margin-bottom: 1px; }
.big .dd { width: 4px; height: 3px; margin-top: 2px; }
.hot { background: #7a7a7a; outline: 1px solid #8a8a8a; }
.p-draw .body { padding-left: 3px; }
.wide { width: 34px; }
.p-annot .big, .p-layer .big, .p-block .big, .p-props .big, .p-group .big { width: 31px; }
.p-annot .body { padding-left: 2px; }
.p-util .big, .p-clip .big { width: 37px; }
.p-view .big { width: 44px; }

.col { display: grid; grid-template-rows: repeat(3, 18px); width: 30px; align-content: start; }
.col button { display: flex; align-items: center; gap: 5px; }
.col button > svg:first-child { width: 14px; height: 14px; }
.col .dd { width: 4px; height: 3px; }
.slim { width: 17px; }
.slim button { justify-content: center; }
.lab { width: 43px; }
.lab button { gap: 3px; }
.p-modify .body { padding-left: 4px; }
.sel { background: #3a78b8; border: 1px solid #79abd9; }

.combo {
  display: flex;
  align-items: center;
  height: 16px;
  padding: 0 3px;
  background: linear-gradient(#5e5e5e, #4c4c4c);
  border: 1px solid #3b3b3b;
  border-top-color: #777;
}
.combo select { flex: 1; min-width: 0; appearance: none; }
.combo .dd { width: 6px; }
.sw { width: 10px; height: 10px; margin: 0 4px; background: #fff; flex: none; }
.rule { width: 46px; height: 1px; margin-right: 1px; background: #bbb; flex: none; }
.thick { height: 2px; background: #eee; }
.layers { flex: 1; padding: 1px 2px 0 0; }
.p-layer .combo { padding-left: 1px; }
.icons { display: grid; grid-template: repeat(2, 18px) / repeat(5, 18px); align-items: center; padding-top: 1px; }
.icons svg { width: 14px; height: 14px; }
.p-layer .sw { margin-left: 3px; }
.props .sw { margin: 0 7px 0 5px; width: 11px; height: 11px; }
.props {
  flex: 1;
  display: grid;
  grid-template: repeat(3, 18px) / 14px 1fr;
  align-items: center;
  align-content: start;
  column-gap: 1px;
  padding-right: 2px;
}

.files { display: flex; padding: 1px 0 0 12px; background: #393939; border-bottom: 3px solid #646464; }
.file {
  width: 52px;
  height: 16px;
  padding-right: 12px;
  background: #505050;
  color: #aaa;
  clip-path: polygon(6px 0, 100% 0, 100% 100%, 0 100%);
}
.file.on {
  display: flex;
  align-items: center;
  justify-content: space-between;
  width: 136px;
  padding: 0 13px 0 50px;
  background: #6e6e6e;
  color: #eee;
  clip-path: polygon(6px 0, 128px 0, 100% 100%, 0 100%);
}
.file.on svg { width: 7px; height: 7px; }
.file.add { width: 20px; height: 14px; padding: 0 6px; border-radius: 6px; clip-path: none; }

.work { flex: 1; display: flex; min-height: 0; }
.canvas { flex: 1; position: relative; background: #000; overflow: hidden; }
.grid { position: absolute; inset: 0; width: 100%; height: 100%; }
.edge { width: 6px; background: linear-gradient(#b5daf0 17%, #90c7e4 17%, #a8d2ea); border-right: 2px solid #24485a; }
.docbtns { position: absolute; top: 6px; right: 8px; width: 38px; height: 10px; }
.viewcube {
  position: absolute;
  top: 25px;
  right: 9px;
  width: 74px;
  height: 74px;
  display: grid;
  grid-template: 20px 34px 20px / 20px 34px 20px;
  place-items: center;
  color: #aaa;
  font-size: 10px;
  background: radial-gradient(circle, transparent 25px, #3c3c3c 26px 32px, transparent 33px);
}
.n, .s { grid-column: 2; }
.n { align-self: start; }
.s { align-self: end; }
.w, .face, .e { grid-row: 2; }
.w { justify-self: start; }
.e { justify-self: end; }
.face { width: 28px; height: 28px; background: #aaa; border: 1px solid #c2c2c2; color: #444; font-size: 16px; }
.wcs {
  position: absolute;
  top: 110px;
  right: 29px;
  width: 35px;
  height: 12px;
  padding-left: 3px;
  border: 1px solid #aaa;
  border-radius: 3px;
  background: #8d8d93;
  color: #5d5d66;
  font-size: 8px;
  line-height: 10px;
  text-align: left;
}
.navbar { position: absolute; top: 141px; right: 2px; width: 24px; height: 156px; }
.ucs { position: absolute; left: 0; bottom: 0; width: 62px; height: 52px; z-index: 2; opacity: .7; }
.yaxis { position: absolute; left: 11px; bottom: 49px; width: 10px; height: 12px; }
.mascot { position: absolute; right: 123px; bottom: 73px; width: 30px; height: 14px; }
.cmd {
  position: absolute;
  left: 0;
  bottom: 0;
  width: 66%;
  height: 20px;
  display: flex;
  align-items: center;
  background: #92ac92;
  border-top: 1px solid #a9bca9;
}
.tools { align-self: stretch; width: 40px; background: #3f3f3f; }
.tools svg { width: 40px; height: 18px; }
.prompt { width: 22px; height: 18px; }
.cmd input { flex: 1; padding-left: 5px; }
.cmd input::placeholder { color: #5c705c; }
.up { width: 5px; height: 4px; margin-right: 3px; }

.status { display: flex; justify-content: space-between; height: 19px; background: #383838; }
.layouts { display: flex; padding-left: 9px; gap: 2px; }
.layouts button {
  width: 37px;
  height: 14px;
  background: #525252;
  color: #bbb;
  clip-path: polygon(0 0, 100% 0, 86% 100%, 14% 100%);
}
.layouts .on { width: 34px; background: #8a8a8a; color: #fff; font-weight: bold; }
.layouts .add { width: 22px; padding: 0 7px; }
.toggles { display: flex; background: #575757; border-top: 1px solid #6b6b6b; }
.toggles button { display: flex; align-items: center; justify-content: center; }
.toggles svg { width: 14px; height: 14px; }
.toggles .dd { width: 6px; height: 4px; }
.toggles .txt { color: #fff; }
.sep { border-right: 1px solid #3f3f3f; }
.act { background: #4d87bd; }
.w11 { width: 11px; }
.w14 { width: 14px; }
.w16 { width: 16px; }
.w18 { width: 18px; }
.w20 { width: 20px; }
.w24 { width: 24px; }

.tip {
  position: absolute;
  left: 51px;
  top: 81px;
  background: #f7f7fa;
  border: 1px solid #b5b5bd;
  color: #444;
  white-space: nowrap;
  box-shadow: 1px 1px 2px #000;
}
.tip-a { padding: 5px 4px; }
.tip-a p { margin-top: 5px; color: #666; }
.tip strong { display: block; font-weight: 500; color: #222; }
.tip-b { padding: 4px 4px 5px; background: #e6e7f1; border-top: 1px solid #c3c3cb; }
.cmdname { display: flex; align-items: center; gap: 3px; margin-bottom: 5px; }
.tip-b svg { width: 12px; height: 12px; }
.pointer { position: absolute; left: 103px; top: 99px; width: 372px; height: 245px; }
.brand {
  position: absolute;
  right: 55px;
  bottom: 14px;
  width: 180px;
  height: 85px;
  display: flex;
  align-items: center;
  gap: 12px;
  padding-left: 14px;
  background: #22305a;
  color: #ccd0df;
}
.brand svg { width: 36px; height: 36px; }
.brand strong { display: block; font-size: 26px; line-height: 28px; font-weight: 500; }
.brand span { display: block; font: 12px/14px "DejaVu Sans", sans-serif; }
.ball {
  position: absolute;
  right: -20px;
  top: 443px;
  width: 34px;
  height: 34px;
  padding-left: 2px;
  border-radius: 50%;
  background: #3fae4c;
  border: 2px solid #d5ead6;
  color: #fff;
  font-size: 8px;
  font-weight: bold;
  line-height: 30px;
}
```
